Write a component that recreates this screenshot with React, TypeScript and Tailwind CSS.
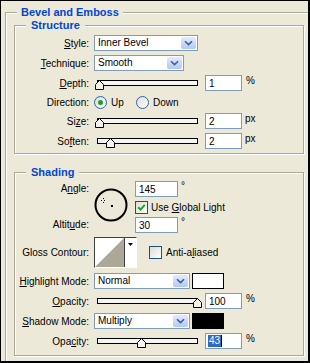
import React from 'react';

// mnemonic underline
const U = ({ c }: { c: string }) => <span className="underline underline-offset-[1px]">{c}</span>;

const Chevron = () => (
  <svg width="9" height="6" viewBox="0 0 9 6">
    <path d="M1 1.2 L4.5 4.6 L8 1.2" fill="none" stroke="#3D5F9E" strokeWidth="1.6" />
    <rect x="4" y="3.4" width="1" height="1" fill="#2E9B3A" />
  </svg>
);

function Combo({ value, w }: { value: string; w: string }) {
  return (
    <div className={`flex h-[16px] shrink-0 items-stretch border border-[#7F9DB9] bg-white ${w}`}>
      <span className="flex-1 truncate pl-[3px] leading-[14px]">{value}</span>
      <span className="m-px flex w-[15px] items-center justify-center rounded-[2px] bg-linear-to-b from-[#E3EBFE] to-[#B4C8F5]">
        <Chevron />
      </span>
    </div>
  );
}

function Field({ value, w = 'w-[37px]', selected = false }: { value: string; w?: string; selected?: boolean }) {
  return (
    <div className={`flex h-[16px] shrink-0 items-center border border-[#7F9DB9] bg-white pl-[2px] ${w}`}>
      {selected ? (
        <>
          <span className="bg-[#316AC5] px-px leading-[12px] text-white">{value}</span>
          <span className="h-[12px] w-px bg-black" />
        </>
      ) : (
        <span className="pl-px">{value}</span>
      )}
    </div>
  );
}

function Slider({ pct }: { pct: number }) {
  return (
    <div className="relative h-[16px] w-[111px] shrink-0">
      <div className="ml-[3px] mt-[5px] h-[6px] w-[101px] border border-black bg-[#F6F5EF]" />
      <svg className="absolute top-[5px]" style={{ left: Math.round(pct * 0.99) }} width="9" height="10" viewBox="0 0 9 10">
        <path d="M4.5 0.5 L8.5 4.5 V9.5 H0.5 V4.5 Z" fill="#F4F3EE" stroke="#000" />
      </svg>
    </div>
  );
}

function Radio({ checked = false }: { checked?: boolean }) {
  return (
    <span className="flex h-[13px] w-[13px] shrink-0 items-center justify-center rounded-full border border-[#2F65A8] bg-linear-to-br from-[#DCDCD7] to-white">
      {checked && <span className="h-[5px] w-[5px] rounded-full bg-[#21A121]" />}
    </span>
  );
}

function Check({ checked = false }: { checked?: boolean }) {
  return (
    <span className="flex h-[13px] w-[13px] shrink-0 items-center justify-center border border-[#1C5180] bg-linear-to-br from-[#DCDCD7] to-white">
      {checked && (
        <svg width="9" height="9" viewBox="0 0 9 9">
          <path d="M1.2 4.2 L3.5 6.6 L7.8 1.8" fill="none" stroke="#21A121" strokeWidth="2" />
        </svg>
      )}
    </span>
  );
}

function Row({ label, children, className = '' }: { label: React.ReactNode; children: React.ReactNode; className?: string }) {
  return (
    <div className={`flex h-[16px] items-center ${className}`}>
      <div className="w-[74px] shrink-0 text-right">{label}</div>
      <div className="ml-[5px] flex items-center">{children}</div>
    </div>
  );
}

function Group({ title, children, className = '' }: { title: string; children: React.ReactNode; className?: string }) {
  return (
    <fieldset className={`ml-[8px] w-[290px] border border-[#ACA899] shadow-[1px_1px_0_#fff,inset_1px_1px_0_#fff] ${className}`}>
      <legend className="ml-[11px] bg-[#ECE9D8] px-[5px] text-[11px] font-bold leading-[13px] text-[#0046D5]">{title}</legend>
      {children}
    </fieldset>
  );
}

export default function App() {
  return (
    <div className="h-[363px] w-[310px] overflow-hidden border-t border-l border-r-2 border-b-2 border-black bg-[#ECE9D8] font-['Liberation_Sans',Arial,sans-serif] text-[10px] text-black">
      <fieldset className="ml-[4px] mt-[5px] h-[400px] border-t border-l border-[#ACA899] shadow-[inset_1px_1px_0_#fff]">
        <legend className="ml-[11px] bg-[#ECE9D8] px-[4px] text-[11px] font-bold leading-[13px] text-[#0046D5]">Bevel and Emboss</legend>

        <Group title="Structure">
          <div className="flex flex-col gap-[4px] pb-[4px] pt-[3px]">
            <Row label={<><U c="S" />tyle:</>}>
              <Combo value="Inner Bevel" w="w-[104px]" />
            </Row>
            <Row label={<><U c="T" />echnique:</>}>
              <Combo value="Smooth" w="w-[90px]" />
            </Row>
            <Row label={<><U c="D" />epth:</>}>
              <Slider pct={1} />
              <Field value="1" />
              <span className="ml-[4px] self-start leading-[12px]">%</span>
            </Row>
            <Row label="Direction:" className="!h-[14px]">
              <div className="flex w-[42px] items-center">
                <Radio checked />
                <span className="ml-[4px]">Up</span>
              </div>
              <Radio />
              <span className="ml-[4px]">Down</span>
            </Row>
            <Row label={<>Si<U c="z" />e:</>}>
              <Slider pct={0.8} />
              <Field value="2" />
              <span className="ml-[3px] self-start leading-[12px]">px</span>
            </Row>
            <Row label={<>So<U c="f" />ten:</>}>
              <Slider pct={12.5} />
              <Field value="2" />
              <span className="ml-[3px] self-start leading-[12px]">px</span>
            </Row>
          </div>
        </Group>

        <Group title="Shading" className="mt-[12px]">
          <div className="flex flex-col pb-[6px] pt-[2px]">
            <div className="flex">
              <div className="flex w-[74px] shrink-0 flex-col justify-between text-right leading-[16px]">
                <div>A<U c="n" />gle:</div>
                <div>Altit<U c="u" />de:</div>
              </div>
              <svg className="ml-[5px] mt-[6px] shrink-0" width="36" height="36" viewBox="0 0 36 36">
                <circle cx="17" cy="18" r="15.5" fill="none" stroke="#000" strokeWidth="2" />
                <path d="M7 13.5 H8 M10 13.5 H11 M9.5 11 V12 M9.5 15 V16" stroke="#000" strokeWidth="1" />
                <rect x="17" y="18" width="2" height="2" fill="#000" />
              </svg>
              <div className="ml-[5px] flex flex-col">
                <div className="flex h-[16px] items-start">
                  <Field value="145" w="w-[43px]" />
                  <span className="ml-[3px] leading-[10px]">°</span>
                </div>
                <div className="flex h-[20px] items-center">
                  <Check checked />
                  <span className="ml-[3px]">Use <U c="G" />lobal Light</span>
                </div>
                <div className="flex h-[16px] items-start">
                  <Field value="30" w="w-[43px]" />
                  <span className="ml-[3px] leading-[10px]">°</span>
                </div>
              </div>
            </div>

            <div className="mt-[4px] flex h-[31px] items-center">
              <div className="w-[74px] shrink-0 text-right">Gloss Contour:</div>
              <div className="ml-[5px] flex h-[31px] w-[43px] shrink-0 border border-t-[#404040] border-l-[#404040] border-r-white border-b-white bg-white">
                <svg width="29" height="29" viewBox="0 0 29 29" className="shrink-0">
                  <rect width="29" height="29" fill="#fff" />
                  <polygon points="0,29 29,0 29,29" fill="#ACA899" />
                </svg>
                <div className="flex flex-1 justify-center border-l border-[#404040] pt-[5px]">
                  <svg width="5" height="3" viewBox="0 0 5 3">
                    <polygon points="0,0 5,0 2.5,3" fill="#000" />
                  </svg>
                </div>
              </div>
              <span className="ml-[12px]">
                <Check />
              </span>
              <span className="ml-[4px]">Anti-a<U c="l" />iased</span>
            </div>

            <div className="mt-[5px] flex flex-col gap-[4px]">
              <Row label={<><U c="H" />ighlight Mode:</>}>
                <Combo value="Normal" w="w-[96px]" />
                <div className="ml-[2px] h-[16px] w-[32px] border border-black bg-white" />
              </Row>
              <Row label={<><U c="O" />pacity:</>}>
                <Slider pct={100} />
                <Field value="100" />
                <span className="ml-[4px] self-start leading-[12px]">%</span>
              </Row>
              <Row label={<><U c="S" />hadow Mode:</>}>
                <Combo value="Multiply" w="w-[96px]" />
                <div className="ml-[2px] h-[16px] w-[32px] border border-black bg-black" />
              </Row>
              <Row label={<>Opa<U c="c" />ity:</>}>
                <Slider pct={43} />
                <Field value="43" selected />
                <span className="ml-[4px] self-start leading-[12px]">%</span>
              </Row>
            </div>
          </div>
        </Group>
      </fieldset>
    </div>
  );
}
